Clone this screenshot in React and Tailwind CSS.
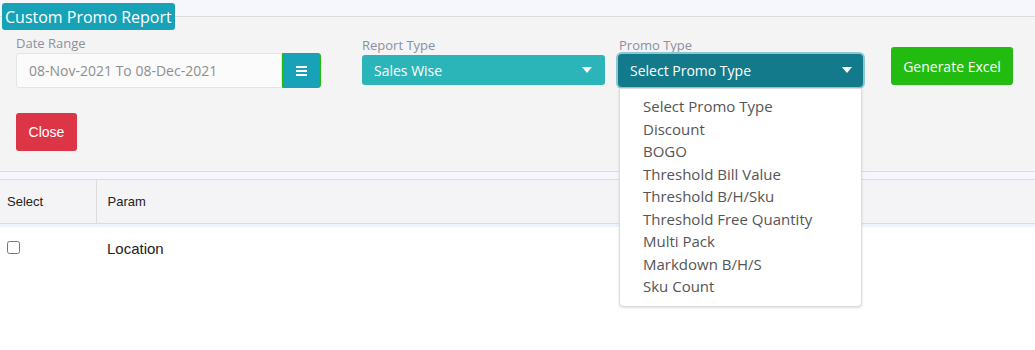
import { useState } from 'react';

const promoTypes = [
    'Select Promo Type',
    'Discount',
    'BOGO',
    'Threshold Bill Value',
    'Threshold B/H/Sku',
    'Threshold Free Quantity',
    'Multi Pack',
    'Markdown B/H/S',
    'Sku Count',
];

const poppins = { fontFamily: '"Open Sans", "Noto Sans", sans-serif' };

const Caret = () => (
    <svg width="10" height="7" viewBox="0 0 10 7" className="shrink-0">
        <path d="M0 0 L10 0 L5 6 Z" fill="#fff" />
    </svg>
);

const App = () => {
    const [checked, setChecked] = useState(false);

    return (
        <div className="relative w-[1035px] h-[350px] bg-white overflow-hidden" style={poppins}>
            {/* top strip */}
            <div className="h-[17px] bg-[#f5f7fc] border-b border-[#dcdcdc]"></div>

            {/* title badge */}
            <div className="absolute left-[2px] top-[3px] h-[27px] px-[3px] flex items-center rounded-[3px] bg-[#17a2b8] text-white text-[16px] font-medium leading-none">
                Custom Promo Report
            </div>

            {/* filter panel */}
            <div className="h-[155px] bg-[#f4f4f4] border-b border-[#dcdcdc] pl-4 pt-[17px]">
                <div className="flex items-start">
                    <div className="flex flex-col">
                        <span className="text-[13px] text-[#8b909c] leading-[18px]">Date Range</span>
                        <div className="flex mt-[1px]">
                            <div className="w-[266px] h-[35px] bg-[#fbfbfb] border border-[#e4e4e4] rounded-l-[3px] flex items-center pl-3 text-[14px] text-[#8e8e8e]">
                                08-Nov-2021 To 08-Dec-2021
                            </div>
                            <div className="w-[39px] h-[35px] bg-[#17a2b8] border border-[#22bb10] rounded-r-[3px] flex flex-col items-center justify-center gap-[2px]">
                                <span className="block w-[11px] h-[2px] bg-white"></span>
                                <span className="block w-[11px] h-[2px] bg-white"></span>
                                <span className="block w-[11px] h-[2px] bg-white"></span>
                            </div>
                        </div>
                    </div>

                    <div className="flex flex-col ml-[41px] mt-[2px]">
                        <span className="text-[13px] text-[#8b909c] leading-[18px]">Report Type</span>
                        <div className="w-[243px] h-[30px] mt-[1px] bg-[#2bb5b8] rounded-[3px] flex items-center justify-between pl-3 pr-[13px] text-white text-[14px]">
                            <span>Sales Wise</span>
                            <Caret />
                        </div>
                    </div>

                    <div className="relative flex flex-col ml-[13px] mt-[2px]">
                        <span className="text-[13px] text-[#8b909c] leading-[18px] ml-[1px]">Promo Type</span>
                        <div className="w-[245px] h-[33px] bg-[#127a8a] rounded-[4px] ring-2 ring-[#8cc7d3] flex items-center justify-between pl-3 pr-[11px] text-white text-[14px]">
                            <span>Select Promo Type</span>
                            <Caret />
                        </div>

                        {/* open dropdown list */}
                        <div className="absolute left-[1px] top-[52px] z-10 w-[243px] bg-white border border-[#dcdcdc] rounded-b-[4px] pt-[6px] pb-[8px] shadow-sm">
                            {promoTypes.map((t) => (
                                <div key={t} className="pl-[23px] h-[22.5px] leading-[22.5px] text-[15px] text-[#555]">
                                    {t}
                                </div>
                            ))}
                        </div>
                    </div>

                    <button className="ml-[28px] mt-[13px] w-[122px] h-[38px] bg-[#22bb10] rounded-[3px] text-white text-[14px] font-medium">
                        Generate Excel
                    </button>
                </div>

                <button
                    className="mt-[25px] w-[61px] h-[38px] bg-[#dc3545] rounded-[3px] text-white text-[14px]"
                    style={{ fontFamily: '"Liberation Sans", Arial, sans-serif' }}
                >
                    Close
                </button>
            </div>

            {/* table */}
            <div className="h-[8px] bg-[#f5f7fc] border-b border-[#dcdcdc]"></div>
            <table className="w-full border-collapse" style={{ fontFamily: '"Liberation Sans", Arial, sans-serif' }}>
                <thead>
                    <tr className="h-[43px] bg-[#f4f4f6] border-b border-[#dcdcdc]">
                        <th className="w-[96px] text-left font-normal text-[13px] text-[#222] pl-[7px] pt-[1px] border-r border-[#dcdcdc]">Select</th>
                        <th className="text-left font-normal text-[13px] text-[#222] pl-[11px] pt-[1px]">Param</th>
                    </tr>
                </thead>
                <tbody>
                    <tr className="h-[4px] bg-[#eef2fb]"><td colSpan="2"></td></tr>
                    <tr className="h-[41px]">
                        <td className="pl-[7px]">
                            <input
                                type="checkbox"
                                checked={checked}
                                onChange={() => setChecked(!checked)}
                                className="block w-[13px] h-[13px] m-0"
                            />
                        </td>
                        <td className="pl-[11px] pt-[3px] text-[15px] text-[#222]">Location</td>
                    </tr>
                </tbody>
            </table>
        </div>
    );
};

export default App;
